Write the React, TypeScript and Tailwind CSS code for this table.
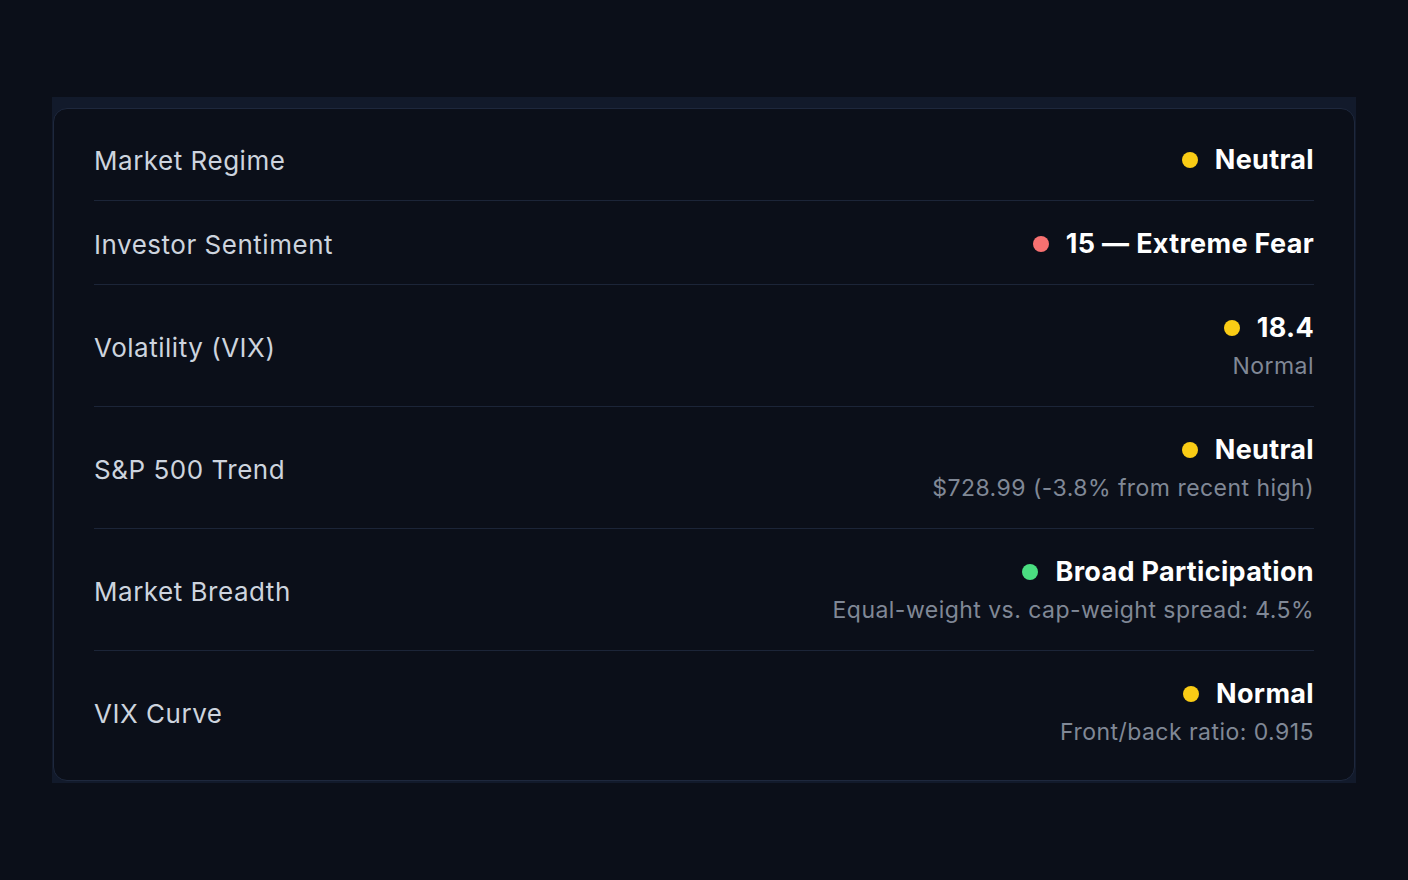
import React from "react";

type Row = { label: string; value: string; dot: string; sub?: string };

const rows: Row[] = [
  { label: "Market Regime", value: "Neutral", dot: "bg-[#facc15]" },
  { label: "Investor Sentiment", value: "15 — Extreme Fear", dot: "bg-[#f87171]" },
  { label: "Volatility (VIX)", value: "18.4", dot: "bg-[#facc15]", sub: "Normal" },
  { label: "S&P 500 Trend", value: "Neutral", dot: "bg-[#facc15]", sub: "$728.99 (-3.8% from recent high)" },
  { label: "Market Breadth", value: "Broad Participation", dot: "bg-[#4ade80]", sub: "Equal-weight vs. cap-weight spread: 4.5%" },
  { label: "VIX Curve", value: "Normal", dot: "bg-[#facc15]", sub: "Front/back ratio: 0.915" },
];

export default function App() {
  return (
    <div
      className="min-h-[880px] w-full bg-[#0b0f19] pl-[52px] pr-[52px] pt-[97px]"
      style={{ fontFamily: "Inter, 'Noto Sans', sans-serif" }}
    >
      <div className="bg-[#121a2b] px-px pt-[11px] pb-[2px]">
        <div className="rounded-[14px] border border-[#1e283d] bg-[#0b0f19] px-10 py-2">
          {rows.map((r, i) => (
            <div
              key={r.label}
              className={
                "flex items-center justify-between py-6 " +
                (i < rows.length - 1 ? "border-b border-[#1c2538]" : "")
              }
            >
              <div className="pt-[4px] text-[26px] leading-[31px] tracking-[0.02em] text-[#cdd4de]">{r.label}</div>
              <div className="flex flex-col items-end">
                <div className="flex items-center gap-[17px] pt-[2px]">
                  <span className={"h-4 w-4 rounded-full " + r.dot} />
                  <span className="text-[27px] font-bold leading-[33px] tracking-[0.012em] text-white">{r.value}</span>
                </div>
                {r.sub && (
                  <div className="mt-[7px] text-[23px] leading-[31px] tracking-[0.02em] text-[#808896]">{r.sub}</div>
                )}
              </div>
            </div>
          ))}
        </div>
      </div>
    </div>
  );
}
